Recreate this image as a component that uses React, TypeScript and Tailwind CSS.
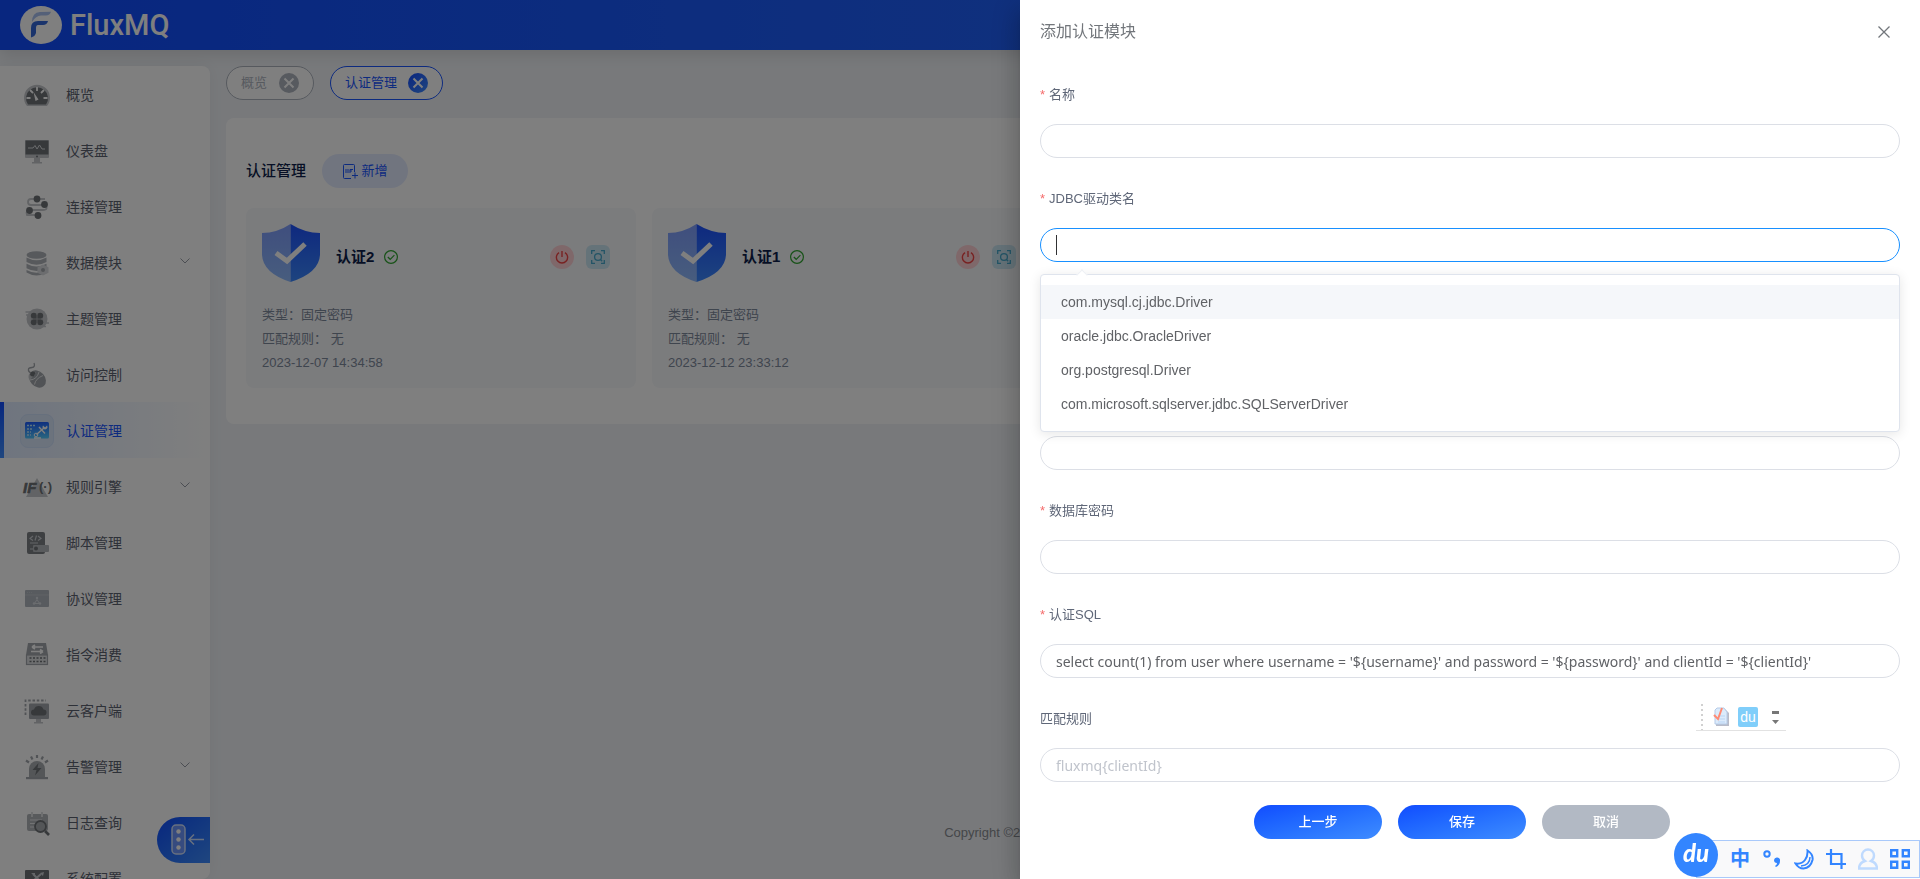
import React from 'react';

const DARK = '#6e7276';
const MID = '#a3a7ac';
const LIGHT = '#c4c7cb';

const icons: Record<string, React.ReactNode> = {
  overview: (
    <>
      <path d="M4 25a13 13 0 1 1 20 0z" fill={LIGHT} />
      <path d="M5 23.5a11 11 0 1 1 18 0z" fill={DARK} />
      <path d="M14 6v4M7 9l3 3M21 9l-3 3M3.500 17h4M20.500 17h4" stroke="#fff" strokeWidth="1.800" />
      <path d="M10.500 11l5 7.500-3 1.500z" fill="#fff" />
    </>
  ),
  dashboard: (
    <>
      <rect x="2" y="3" width="24" height="18" rx="1" fill={LIGHT} />
      <rect x="2.500" y="3.500" width="23" height="14" fill={DARK} />
      <path d="M11 21h6v4h2v1.500H9V25h2z" fill={LIGHT} />
      <path d="M5 11h5l2-2.500 2 3.500 2.500-4 2.500 4h3" stroke="#d8dadd" fill="none" />
      <circle cx="14" cy="19.500" r="1" fill={DARK} />
    </>
  ),
  connection: (
    <>
      <path d="M22 6H8a3 3 0 0 0 0 6h13M22 11q4 6-2 6H8q-6 0-4 5h10" stroke={LIGHT} strokeWidth="1.800" fill="none" />
      <circle cx="14" cy="6" r="3.400" fill={DARK} />
      <circle cx="21.500" cy="11.500" r="3.400" fill={DARK} />
      <circle cx="6.500" cy="17.500" r="3.400" fill={DARK} />
      <circle cx="15" cy="22.500" r="3.400" fill={DARK} />
    </>
  ),
  data: (
    <>
      <ellipse cx="13.500" cy="6" rx="10" ry="3.800" fill="#afb3b9" />
      <path d="M3.500 8.500q10 5.500 20 0V13q-10 5.500-20 0zM3.500 14.800q10 5.500 20 0v4.400q-10 5.500-20 0zM3.500 21q10 5.500 20 0v2.500q-10 6-20 0z" fill="#afb3b9" />
      <path d="M20 15.500l5.500 2.800v5.400L20 26.500l-5.500-2.800v-5.400z" fill="#d8dade" />
      <circle cx="20" cy="21" r="2" fill={MID} />
    </>
  ),
  topic: (
    <>
      <circle cx="14" cy="14" r="10.500" fill={LIGHT} />
      <path d="M2.500 7h7M3 10h5M19 18h7M18 21.500h5" stroke={LIGHT} strokeWidth="1.300" />
      <circle cx="10.800" cy="10.800" r="3" fill={DARK} />
      <circle cx="17.200" cy="10.800" r="3" fill={DARK} />
      <circle cx="10.800" cy="17.200" r="3" fill={DARK} />
      <circle cx="17.200" cy="17.200" r="3" fill={DARK} />
      <path d="M10 10h8v8h-8z" fill={DARK} />
      <path d="M14 8v12M8 14h12" stroke="#a9acb0" strokeWidth="1" />
    </>
  ),
  access: (
    <>
      <path d="M11 2q1.500 4-2 4.500T5.500 8q-.5 3 3 4" stroke={MID} strokeWidth="1.300" fill="none" />
      <ellipse cx="14.500" cy="18" rx="7.500" ry="9.500" transform="rotate(-42 14.500 18)" fill={MID} />
      <path d="M5.500 16q0-5 5-5.500l2.500 1-6 7.500q-1.500-1-1.500-3z" fill={LIGHT} />
      <path d="M7.500 11.500q3-2 5 .5l-2 3.500q-2.500 0-3.500-1.500z" fill={DARK} />
      <path d="M7 19q7-.5 9-8M11.500 23.500q1-6 8.500-9" stroke="#e6e7e9" fill="none" />
    </>
  ),
  auth: (
    <>
      <defs>
        <linearGradient id="authBg" x1="0.300" y1="0" x2="0.400" y2="1">
          <stop offset="0" stopColor="#1d5cff" />
          <stop offset="1" stopColor="#52c8ff" />
        </linearGradient>
      </defs>
      <rect x="2" y="5" width="24" height="16.500" rx="1.500" fill="url(#authBg)" />
      <path d="M4 8.500h9M4 12h6M4 15h4M4 18h4" stroke="#b9e4ff" strokeWidth="1.300" strokeDasharray="2 1" />
      <path d="M13.500 17.500l8-7M16 10l6 6.500M11 21h7" stroke="#fff" strokeWidth="1.400" />
      <circle cx="13" cy="18" r="1.800" fill="none" stroke="#fff" />
      <path d="M20 8.500a2.500 2.500 0 1 0 4 0l-2 2z" fill="#fff" />
    </>
  ),
  rule: (
    <>
      <path d="M14 5l11 19H3z" fill={LIGHT} />
      <text x="0" y="19.500" fontSize="15" fontWeight="bold" fontStyle="italic" fill={DARK} stroke={DARK} strokeWidth="0.600">IF</text>
      <text x="16" y="18" fontSize="13" fontWeight="bold" fill={DARK}>(·)</text>
    </>
  ),
  script: (
    <>
      <rect x="4" y="3" width="18" height="22" rx="2" fill="#7c8085" />
      <path d="M10 7L7 9.500l3 2M15 7l3 2.500-3 2M13.500 6.500l-1.500 5M7 14h8M7 20h3" stroke="#c9ccd0" strokeWidth="1.200" fill="none" />
      <rect x="10" y="16" width="16" height="7" rx="1" fill="#b3b6ba" />
      <circle cx="13" cy="19.500" r="2" fill={DARK} />
    </>
  ),
  protocol: (
    <>
      <rect x="2" y="5" width="24" height="17" rx="1" fill="#b1b7bf" />
      <path d="M4 7.500h1m1 0h1m1 0h1M2 10h24" stroke="#bfc4cb" />
      <path d="M14 12v2m-2.500 4.500l2.500-4 2.500 4z" stroke="#d6dadf" fill="none" />
      <circle cx="14" cy="13" r="1.200" fill="#d6dadf" />
      <circle cx="11" cy="18.500" r="1.200" fill="#d6dadf" />
      <circle cx="17" cy="18.500" r="1.200" fill="#d6dadf" />
    </>
  ),
  command: (
    <>
      <path d="M5 2h18l2 12H3z" fill={MID} />
      <path d="M20 6H9m0 0l3-2M9 6l3 2M8 10.500h12m0 0l-3-2m3 2l-3 2" stroke="#fff" strokeWidth="1.600" fill="none" />
      <rect x="3.500" y="14" width="21" height="9.500" fill="#dcdee1" stroke={MID} strokeWidth="1.200" />
      <path d="M6.500 17h16M6.500 20.500h16" stroke={DARK} strokeWidth="1.600" strokeDasharray="2 1.500" />
    </>
  ),
  cloud: (
    <>
      <path d="M2.500 18V3.500H23" stroke={MID} strokeWidth="1.800" strokeDasharray="2.500 1.800" fill="none" />
      <rect x="6" y="6.500" width="20" height="15.500" rx="1" fill={MID} />
      <path d="M13 22h5v3h2v1.500h-9V25h2z" fill={LIGHT} />
      <path d="M11 18.500a3 3 0 0 1 0-6 5 5 0 0 1 9.500 0 3 3 0 0 1 0 6z" fill={DARK} />
    </>
  ),
  alarm: (
    <>
      <path d="M6 24v-8a8 8 0 0 1 16 0v8z" fill="#a9adb1" />
      <rect x="3" y="24" width="22" height="2.200" fill={MID} />
      <path d="M3 7.500l3 2M8 3.500l1.500 3M14 2v3M20 3.500L18.500 6.500M25 7.500l-3 2" stroke={MID} strokeWidth="2.200" />
      <path d="M15.500 10L9.500 17h4l-1.500 5.500 6.500-7.500h-4z" fill={DARK} />
    </>
  ),
  log: (
    <>
      <rect x="4" y="5" width="21" height="17" rx="2" fill="#b1b4b8" />
      <path d="M9 3v5M19 3v5" stroke="#dcdee0" strokeWidth="2" />
      <path d="M7 11h12M7 14.500h6M7 18h5" stroke="#e4e6e8" strokeWidth="1.200" />
      <circle cx="17.500" cy="17.500" r="5.500" fill="#a9adb1" stroke={DARK} strokeWidth="1.800" />
      <path d="M22 22l4 4" stroke={DARK} strokeWidth="2.600" />
    </>
  ),
  system: (
    <>
      <rect x="2" y="5" width="24" height="17" rx="1" fill={DARK} />
      <path d="M9 17l9-8M10 9l8 8" stroke="#c9ccd0" strokeWidth="2" />
      <path d="M8 8h4v3zM17 8l4-1-1 4z" fill="#c9ccd0" />
    </>
  ),
};

const menu = [
  { icon: 'overview', label: '概览' },
  { icon: 'dashboard', label: '仪表盘' },
  { icon: 'connection', label: '连接管理' },
  { icon: 'data', label: '数据模块', children: true },
  { icon: 'topic', label: '主题管理' },
  { icon: 'access', label: '访问控制' },
  { icon: 'auth', label: '认证管理', active: true },
  { icon: 'rule', label: '规则引擎', children: true },
  { icon: 'script', label: '脚本管理' },
  { icon: 'protocol', label: '协议管理' },
  { icon: 'command', label: '指令消费' },
  { icon: 'cloud', label: '云客户端' },
  { icon: 'alarm', label: '告警管理', children: true },
  { icon: 'log', label: '日志查询' },
  { icon: 'system', label: '系统配置' },
];

const modules = [
  { name: '认证2', type: '固定密码', rule: '无', time: '2023-12-07 14:34:58' },
  { name: '认证1', type: '固定密码', rule: '无', time: '2023-12-12 23:33:12' },
];

const drivers = [
  'com.mysql.cj.jdbc.Driver',
  'oracle.jdbc.OracleDriver',
  'org.postgresql.Driver',
  'com.microsoft.sqlserver.jdbc.SQLServerDriver',
];

const Header = () => (
  <header className="relative z-10 flex h-[50px] shrink-0 items-center gap-2 bg-linear-to-r from-[#104cff] to-[#2f70f8] pl-5 shadow-[0_4px_16px_rgba(0,0,0,0.12)]">
    <svg width="42" height="38" viewBox="0 0 42 38">
      <ellipse cx="21" cy="19" rx="21" ry="19" fill="#fff" />
      <path d="M12 16q0-9.500 8-10l11-.2q-1 3.700-5 3.700h-5q-5 0-9 6.500z" fill="#a9c0f0" />
      <path d="M11 31.500V22q0-7 7-7h10q-1 4-5 4h-5q-2 0-2 3v5q-1 3.500-5 4.500z" fill="#3568d8" />
    </svg>
    <span className="font-['Roboto',sans-serif] text-[29px] leading-10 font-medium text-white">FluxMQ</span>
  </header>
);

const Sidebar = () => (
  <nav className="relative w-[210px] shrink-0 overflow-hidden rounded-r-lg bg-white shadow-[0_0_16px_rgba(0,0,0,0.05)]">
    {menu.map((item) => (
      <a
        key={item.label}
        href="#"
        className={`flex h-14 items-center pt-0.5 text-sm ${
          item.active
            ? 'bg-linear-to-r from-[#deeaff] to-white text-[#1b56ff]'
            : 'text-[#5c6270]'
        }`}
      >
        {item.active && <span className="-mt-0.5 -mr-1 h-14 w-1 bg-linear-to-b from-[#134bff] to-[#3f8cff]" />}
        <span
          className={`mr-3 ml-5 flex size-[34px] items-center justify-center rounded-lg ${
            item.active ? 'border border-[#cfe0fa] bg-[#d8e7fb]' : ''
          }`}
        >
          <svg width="28" height="28" viewBox="0 0 28 28" className="shrink-0 overflow-visible">
            {icons[item.icon]}
          </svg>
        </span>
        {item.label}
        {item.children && (
          <svg width="10" height="6" viewBox="0 0 10 6" fill="none" stroke="#989da6" className="mr-5 mb-1 ml-auto">
            <path d="M.5.500l4.500 4.500L9.500.500" />
          </svg>
        )}
      </a>
    ))}
    <button
      type="button"
      aria-label="收起菜单"
      className="absolute right-0 bottom-4 flex h-[46px] w-[53px] items-center gap-0.5 rounded-l-full bg-linear-to-br from-[#134bff] to-[#3f8cff] pl-3.5"
    >
      <svg width="34" height="32" viewBox="0 0 34 32" fill="none" stroke="#cfe0ff" strokeWidth="1.500">
        <rect x="1" y="1" width="13" height="29" rx="4" fill="#6d96ff" />
        <circle cx="7.500" cy="7.500" r="2.200" fill="#fff" stroke="none" />
        <circle cx="7.500" cy="15.500" r="2.200" fill="#fff" stroke="none" />
        <circle cx="7.500" cy="23.500" r="2.200" fill="#fff" stroke="none" />
        <path d="M33 15.500H18m5-5l-5 5 5 5" />
      </svg>
    </button>
  </nav>
);

const TabClose = ({ from, to, id }: { from: string; to: string; id: string }) => (
  <svg width="20" height="20" viewBox="0 0 20 20">
    <defs>
      <linearGradient id={id} x1="0" y1="0" x2="1" y2="1">
        <stop offset="0" stopColor={from} />
        <stop offset="1" stopColor={to} />
      </linearGradient>
    </defs>
    <circle cx="10" cy="10" r="10" fill={`url(#${id})`} />
    <path d="M5.500 5.500l9 9M14.500 5.500l-9 9" stroke="#fff" strokeWidth="2" />
  </svg>
);

const Tabs = () => (
  <div className="flex gap-4 text-[13px]">
    <button type="button" className="flex h-[34px] items-center gap-3 rounded-full border border-[#aeb4be] bg-white px-3.5 text-[#aeb4be]">
      概览
      <TabClose id="tabGray" from="#aeb4be" to="#aeb4be" />
    </button>
    <button type="button" className="flex h-[34px] items-center gap-[11px] rounded-full border border-[#1b56ff] bg-white px-3.5 text-[#1b56ff]">
      认证管理
      <TabClose id="tabBlue" from="#134bff" to="#3f8cff" />
    </button>
  </div>
);

const Shield = () => (
  <svg width="58" height="58" viewBox="0 0 58 58">
    <defs>
      <linearGradient id="shieldFill" x1="0" y1="0" x2="0" y2="1">
        <stop offset="0" stopColor="#1d52ff" />
        <stop offset="1" stopColor="#3b88ff" />
      </linearGradient>
    </defs>
    <path d="M28.500 0Q15 9 0 9v22q1 18 28.500 27z" fill="url(#shieldFill)" opacity="0.550" />
    <path d="M28.500 0Q43 9 58 9v22q-1 18-29.500 27z" fill="url(#shieldFill)" />
    <path d="M14 29l11 8 18-17" stroke="#fff" strokeWidth="5" fill="none" />
  </svg>
);

const ModuleCard = ({ item }: { item: (typeof modules)[number] }) => (
  <div className="h-[180px] w-[390px] rounded-lg bg-[#f6f8fb] p-4 text-[13px] leading-6 text-[#7f8a9c]">
    <div className="mb-[21px] flex items-center">
      <Shield />
      <span className="mt-2 ml-4 text-[15px] font-bold text-[#0f1f4b]">{item.name}</span>
      <svg width="14" height="14" viewBox="0 0 14 14" fill="none" stroke="#2fa52f" className="mt-2 ml-2.5">
        <circle cx="7" cy="7" r="6.400" strokeWidth="1.200" />
        <path d="M3.800 7l2.400 2.300 4.200-4.200" strokeWidth="1.200" />
      </svg>
      <div className="mt-2 mr-2.5 ml-auto flex gap-3">
        <button type="button" aria-label="停用" className="flex size-6 items-center justify-center rounded-full bg-[#ffd0d4]">
          <svg width="14" height="14" viewBox="0 0 14 14" fill="none" stroke="#f04545" strokeWidth="1.400">
            <path d="M4 2.600a5.600 5.600 0 1 0 6 0M7 1v6" />
          </svg>
        </button>
        <button type="button" aria-label="查看" className="flex size-6 items-center justify-center rounded-md bg-[#cbe6f2]">
          <svg width="14" height="14" viewBox="0 0 14 14" fill="none" stroke="#46a9cd" strokeWidth="1.300">
            <path d="M.7 4V.7H4M10 .7h3.300V4M13.300 10v3.300H10M4 13.300H.7V10M9.500 9.500l1.700 1.700" />
            <circle cx="7" cy="7" r="3.400" />
          </svg>
        </button>
      </div>
    </div>
    <p>类型：{item.type}</p>
    <p>匹配规则： {item.rule}</p>
    <p>{item.time}</p>
  </div>
);

const Content = () => (
  <main className="flex min-w-0 flex-1 flex-col px-4 pb-[34px]">
    <Tabs />
    <section className="mt-[18px] rounded-lg bg-white px-5 py-9">
      <div className="mb-5 flex items-center gap-4">
        <h2 className="text-[15px] font-medium text-[#0f1f4b]">认证管理</h2>
        <button type="button" className="flex h-[34px] w-[86px] items-center justify-center gap-1 rounded-full bg-[#e3eaff] text-[13px] text-[#1b56ff]">
          <svg width="15" height="15" viewBox="0 0 15 15" fill="none" stroke="currentColor">
            <path d="M8 14.500H1.500q-1 0-1-1v-12q0-1 1-1h9q1 0 1 1V8M9 11.500h6M12 8.500v6" />
            <path d="M3 5v4M5 9V5M7 9V5.500h3M7 7h2" />
          </svg>
          新增
        </button>
      </div>
      <div className="flex gap-4 overflow-hidden">
        {modules.map((item) => (
          <ModuleCard key={item.name} item={item} />
        ))}
      </div>
    </section>
    <footer className="mt-auto pr-1 text-center text-[13px] leading-6 text-[#8a8d92]">
      Copyright ©2023 FluxMQ Team 版权所有
    </footer>
  </main>
);

interface FieldProps {
  id: string;
  label: string;
  required?: boolean;
  value?: string;
  placeholder?: string;
  focused?: boolean;
  type?: string;
  children?: React.ReactNode;
}

const Field: React.FC<FieldProps> = ({ id, label, required, value, placeholder, focused, type = 'text', children }) => (
  <div className="relative flex flex-col gap-[17px]">
    <label htmlFor={id} className="flex gap-1 text-[13px] leading-6 text-[#5f6778]">
      {required && <span className="text-[#f56c6c]">*</span>}
      {label}
    </label>
    <input
      id={id}
      type={type}
      defaultValue={value}
      placeholder={placeholder}
      autoComplete="off"
      className={`h-[34px] w-full rounded-full border bg-white px-[15px] font-['Noto_Sans',sans-serif] text-sm text-[#606266] outline-none placeholder:text-[#c0c4cc] ${
        focused ? 'border-[#1890ff] caret-transparent' : 'border-[#dcdfe6]'
      }`}
    />
    {children}
  </div>
);

const DriverSuggestions = () => (
  <>
    <span className="absolute bottom-[7px] left-4 h-5 w-px bg-[#303133]" />
    <div className="absolute top-full right-0 left-0 z-10 mt-3 rounded border border-[#dfe4ed] bg-white py-2.5 shadow-[0_2px_12px_rgba(0,0,0,0.1)]">
      <span className="absolute -top-1 left-[37px] size-2 rotate-45 border-t border-l border-[#eef0f5] bg-white" />
      <ul>
        {drivers.map((driver, index) => (
          <li
            key={driver}
            className={`h-[34px] px-5 text-sm leading-[34px] text-[#606266] ${index === 0 ? 'bg-[#f5f7fa]' : ''}`}
          >
            {driver}
          </li>
        ))}
      </ul>
    </div>
  </>
);

const Drawer = () => (
  <aside className="fixed inset-y-0 right-0 z-30 w-[900px] bg-white px-5 pt-5 shadow-[0_8px_10px_-5px_rgba(0,0,0,0.2),0_16px_24px_2px_rgba(0,0,0,0.14),0_6px_30px_5px_rgba(0,0,0,0.12)]">
    <div className="mb-[39px] flex items-center justify-between text-[#72767b]">
      <h1 className="text-base">添加认证模块</h1>
      <button type="button" aria-label="关闭" className="mr-2.5">
        <svg width="12" height="12" viewBox="0 0 12 12" stroke="currentColor" strokeWidth="1.300">
          <path d="M.5.500l11 11M11.500.500l-11 11" />
        </svg>
      </button>
    </div>
    <form className="flex flex-col gap-[29px]">
      <Field id="name" label="名称" required />
      <Field id="driver" label="JDBC驱动类名" required focused>
        <DriverSuggestions />
      </Field>
      <Field id="url" label="数据库地址" required />
      <Field id="username" label="数据库用户名" required />
      <Field id="password" label="数据库密码" required type="password" />
      <Field
        id="sql"
        label="认证SQL"
        required
        value="select count(1) from user where username = '${username}' and password = '${password}' and clientId = '${clientId}'"
      />
      <Field id="rule" label="匹配规则" placeholder="fluxmq{clientId}" />
      <div className="-mt-1.5 flex justify-center text-[13px] font-medium text-white">
        <button type="button" className="mr-4 h-[34px] w-32 rounded-full bg-linear-to-br from-[#134bff] to-[#3f8cff]">上一步</button>
        <button type="button" className="mr-4 h-[34px] w-32 rounded-full bg-linear-to-br from-[#134bff] to-[#3f8cff]">保存</button>
        <button type="button" className="mr-4 h-[34px] w-32 rounded-full bg-[#b2b9c4]">取消</button>
      </div>
    </form>
  </aside>
);

// small floating language strip of the input method
const LanguageStrip = () => (
  <div className="fixed right-[134px] bottom-[148px] z-40 flex h-[27px] w-[90px] items-center border-b border-[#e2e2e2] pl-[5px]">
    <svg width="2" height="26" viewBox="0 0 2 26" className="mr-2.5">
      <path d="M1 0v26" stroke="#d0d0d0" strokeWidth="2" strokeDasharray="2 3" />
    </svg>
    <svg width="17" height="20" viewBox="0 0 17 20" className="mr-2">
      <path d="M5 2h7l4 4v13H3V4z" fill="#b9bcc9" />
      <path d="M4 1h7l3 4v12H2V3z" fill="#dcebfb" stroke="#b5cbe8" />
      <path d="M5 9h7M5 12h7M5 15h7" stroke="#b9d5f5" />
      <path d="M1 8l4 4L9 1" stroke="#ff8a73" strokeWidth="2" fill="none" />
    </svg>
    <span className="mr-3.5 flex size-5 items-center justify-center rounded-xs bg-[#80cefa] text-sm text-white">du</span>
    <svg width="7" height="13" viewBox="0 0 7 13" fill="#777">
      <path d="M0 0h7v3H0zM0 9h7l-3.500 4z" />
    </svg>
  </div>
);

const ImeBar = () => (
  <div className="fixed right-0 bottom-px z-40 flex h-[38px] w-[224px] items-center gap-3 border border-[#a9c9fa] bg-[#f9f9fa] pl-[33px] text-[#3385ff]">
    <span className="absolute bottom-0 -left-[23px] flex size-11 items-center justify-center rounded-full bg-[#3385ff] pb-1 font-['Lato',sans-serif] text-2xl font-black text-white italic">
      du
    </span>
    <span className="w-5 text-center text-xl leading-5 font-bold">中</span>
    <svg width="20" height="20" viewBox="0 0 20 20">
      <circle cx="5" cy="5" r="2.700" fill="none" stroke="currentColor" strokeWidth="2" />
      <path d="M12 11a3 3 0 1 1 6 1q0 4-4 6l-1-1q2-1 2-3-3 0-3-3z" fill="currentColor" />
    </svg>
    <svg width="20" height="21" viewBox="0 0 20 21" fill="none" stroke="currentColor" strokeWidth="2">
      <path d="M13.500 1.500q6 4 5 9.500-2 8-9 8.500-5 0-8-5 6 1 9.500-3.500 3-4 2.500-9.500z" />
      <path d="M16 8q0 8-9 9" strokeWidth="1.500" />
    </svg>
    <svg width="20" height="20" viewBox="0 0 20 20" fill="none" stroke="currentColor" strokeWidth="2.200">
      <path d="M0 5h15.500v15M5 0v15h15" />
    </svg>
    <svg width="20" height="22" viewBox="0 0 20 22" fill="none" stroke="#bfdafe" strokeWidth="2.400">
      <path d="M7 13q-3-2-3-5.500A6 6 0 0 1 10 1.500a6 6 0 0 1 6 6Q16 11 13 13q6 2 6 7.500H1Q1 15 7 13z" />
    </svg>
    <svg width="20" height="20" viewBox="0 0 20 20" fill="none" stroke="currentColor" strokeWidth="2.400">
      <path d="M1.200 1.200h6v6h-6zM12.800 1.200h6v6h-6zM1.200 12.800h6v6h-6zM12.800 12.800h6v6h-6z" />
    </svg>
  </div>
);

const App: React.FC = () => {
  return (
    <div className="flex h-screen flex-col overflow-hidden bg-[#f0f3f7] font-['Liberation_Sans','Noto_Sans_CJK_SC',sans-serif]">
      <Header />
      <div className="flex min-h-0 flex-1 pt-4">
        <Sidebar />
        <Content />
      </div>
      <div className="fixed inset-0 z-20 bg-black/50" />
      <Drawer />
      <LanguageStrip />
      <ImeBar />
    </div>
  );
};

export default App;
